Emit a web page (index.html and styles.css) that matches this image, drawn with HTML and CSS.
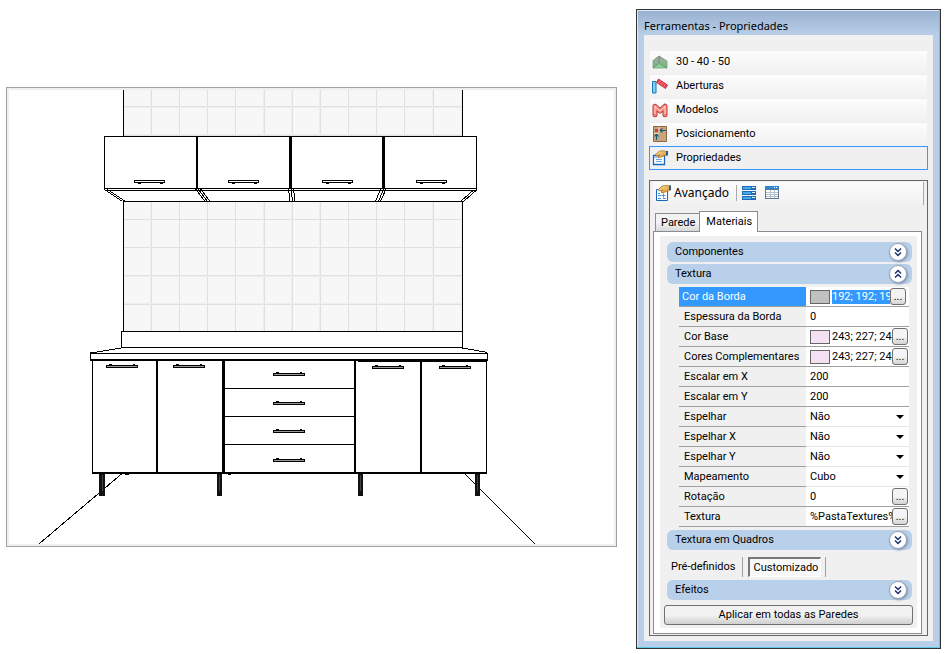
FILE: index.html
```html
<!DOCTYPE html>
<html lang="pt-BR">
<head>
<meta charset="utf-8">
<title>Ferramentas - Propriedades</title>
<link rel="stylesheet" href="styles.css">
</head>
<body>
<svg class="defs" aria-hidden="true">
  <defs>
    <linearGradient id="hand" x1="0" y1="0" x2="1" y2="1"><stop offset="0" stop-color="#ffe3a0"/><stop offset="1" stop-color="#d08a20"/></linearGradient>
    <linearGradient id="wall" x1="0" y1="0" x2="0" y2="1"><stop offset="0" stop-color="#a9b0aa"/><stop offset="1" stop-color="#6cb87e"/></linearGradient>
    <symbol id="chev" viewBox="0 0 18 18">
      <circle cx="9" cy="9" r="8.5" fill="#fff" stroke="#9aa3b8"/>
      <path d="M6 5.5l3 3 3-3M6 9.5l3 3 3-3" fill="none" stroke="#1d2f6f" stroke-width="1.5"/>
    </symbol>
    <symbol id="upper-handle" viewBox="0 0 31 4"><path d="M.5 .5h30v2h-30zM4 3.5h3M26 3.5h3" fill="#fff" stroke="#000"/></symbol>
    <symbol id="lower-handle" viewBox="0 0 32 4"><path d="M.5 1.5h31v2h-31zM3 .5h3M27 .5h2" fill="#999" stroke="#000"/></symbol>
  </defs>
</svg>
<main class="workspace">
  <figure class="view">
    <svg viewBox="9 90 605 454" role="img" aria-label="Vista frontal da cozinha" shape-rendering="crispEdges">
      <path fill="#f7f7f7" d="M124 90h338v241H124z"/>
      <path stroke="#e0e0e0" fill="none" d="M151.5 90v241M179.5 90v241M207.500 90v241M235.500 90v241M264.500 90v241M292.500 90v241M320.500 90v241M348.500 90v241M376.500 90v241M404.500 90v241M433.500 90v241M124 106.500h338M124 135.500h338M124 219.500h338M124 247.500h338M124 275.500h338M124 304.500h338"/>
      <path stroke="#eee" fill="none" d="M150.500 90v241M263.500 90v241M291.500 90v241M319.500 90v241M432.500 90v241M461.500 90v241M124 107.500h338M124 134.500h338M124 276.500h338M124 303.500h338"/>
      <path fill="#fff" d="M104 136h373v54l-14 11H123l-19-12z"/>
      <path fill="#fff" d="M121 331h342v17l25 5v7H90v-7l31-6z"/>
      <g fill="none" stroke="#000">
        <path d="M123.500 90v46M462.500 90v46M123.500 201v130M462.500 201v147"/>
        <path d="M104.500 190v-53.500h372V190M104 188.500h373M106 190.500h369M123 201.500h340"/>
        <path stroke-width="2" d="M197 137v51"/>
        <path stroke-width="3" d="M290.500 137v51M383.500 137v51"/>
        <path d="M104.500 189.500l18 12M107.500 189.500l18 12M195.500 189l9.500 12.500M198 189l9.500 12.500M200.500 189l9.500 12.500M288.500 189l1.500 12.500M291 189l1.500 12.500M293.500 189l1.500 12.500M380.500 189l-5 12.500M383.500 189l-5 12.500M386 189l-5.500 12.500M473.500 190l-13 11.500M476.500 190l-13 11.500"/>
        <path d="M121.500 347v-15.500h341M121 347.500h342M121.500 348l-31 5M462.500 348l25 4.500M90.500 360v-6.500h397v6.500"/>
        <path stroke-width="2" d="M90 360h398M92 473h395M157 361v112M355 361v112M421 361v112"/>
        <path stroke-width="3" d="M223.500 361v112"/>
        <path d="M92.500 361v112M486.500 361v112M225 388.500h129M225 416.500h129M225 444.500h129M125 474.500h4M228 474.500h3M358 361.500h128"/>
        <path d="M121.500 474l-82 69.500M465 474l70 70"/>
      </g>
      <g fill="#111"><path d="M99 474h6v22h-6zM217 474h5v22h-5zM358 474h5v22h-5zM475 474h5v22h-5z"/></g>
      <path stroke="#444" d="M102.500 475v16M219.500 475v16M360.500 475v16M477.500 475v16"/>
      <use href="#upper-handle" x="134" y="180" width="31" height="4"/>
      <use href="#upper-handle" x="228" y="180" width="31" height="4"/>
      <use href="#upper-handle" x="322" y="180" width="31" height="4"/>
      <use href="#upper-handle" x="416" y="180" width="31" height="4"/>
      <use href="#lower-handle" x="106" y="364" width="32" height="4"/>
      <use href="#lower-handle" x="173" y="364" width="32" height="4"/>
      <use href="#lower-handle" x="372" y="365" width="32" height="4"/>
      <use href="#lower-handle" x="439" y="365" width="32" height="4"/>
      <use href="#lower-handle" x="273" y="372" width="32" height="4"/>
      <use href="#lower-handle" x="273" y="401" width="32" height="4"/>
      <use href="#lower-handle" x="273" y="429" width="32" height="4"/>
      <use href="#lower-handle" x="273" y="458" width="32" height="4"/>
    </svg>
  </figure>

  <aside class="window">
    <h1 class="title">Ferramentas - Propriedades</h1>
    <div class="client">
      <nav class="tools">
        <button class="tool" type="button">
          <svg class="icon" viewBox="0 0 16 16"><path d="M1 6.500L7 2v7.500L1 14z" fill="url(#wall)" stroke="#7b937f" stroke-width=".7"/><path d="M7 2l8 5v7L7 9.500z" fill="url(#wall)" stroke="#7b937f" stroke-width=".7"/><path d="M1 14l6-4.500 8 4.500z" fill="#93cf9d" stroke="#5b9468" stroke-width=".7"/><path d="M7 2v7.500M3.500 5.500L7 2l4.500 3.500" fill="none" stroke="#8c948e"/></svg>
          30 - 40 - 50</button>
        <button class="tool" type="button">
          <svg class="icon" viewBox="0 0 16 16"><path d="M.5 3.500H4v11.500H.5z" fill="#7fd0f5" stroke="#1878b8"/><path d="M6.500 1L15.500 7 13.500 10.500 4.500 4.500z" fill="#e34350" stroke="#b82030" stroke-width=".8"/><path d="M8.500 2.500l-2 3M11 4l-2 3M13.500 6l-2 3" stroke="#f8a0a0" stroke-width=".8"/></svg>
          Aberturas</button>
        <button class="tool" type="button">
          <svg class="icon" viewBox="0 0 16 16"><path d="M3 12.800V4.200L8 9l5-4.800v8.600" fill="none" stroke="#b23a35" stroke-width="5" stroke-linejoin="round" stroke-linecap="round"/><path d="M3 12.800V4.200L8 9l5-4.800v8.600" fill="none" stroke="#f58078" stroke-width="3.400" stroke-linejoin="round" stroke-linecap="round"/><path d="M3 12V4.500L8 9l5-4.500V12" fill="none" stroke="#ffc9c0" stroke-width="1.200"/></svg>
          Modelos</button>
        <button class="tool" type="button">
          <svg class="icon" viewBox="0 0 16 16"><path d="M1.500 .5h13v15h-13z" fill="#c9a57b" stroke="#8c6844"/><path d="M3 3h3v3H3z" fill="#d33b35"/><path d="M14 4.500H8M10.500 2.500l-2.500 2 2.500 2M4.500 14V8M2.500 10.500l2-2.500 2 2.500" fill="none" stroke="#176078" stroke-width="1.200"/><path d="M7 1v5M2 7.500h5" stroke="#efe0cb" stroke-width=".8"/></svg>
          Posicionamento</button>
        <button class="tool selected" type="button">
          <svg class="icon" viewBox="0 0 16 16"><path d="M1.500 5.500h11v9h-11z" fill="#fff" stroke="#1766c0" stroke-width="1.300"/><path d="M2 6h4v2H2z" fill="#9cc4f2"/><path d="M4 9.500h6M4 11.500h6" stroke="#68a5e8"/><path d="M3 5l4-3.500 3-.8 5 .8v3.500l-4 1L7 8 6 7l2-2-3 1z" fill="url(#hand)" stroke="#a06a18" stroke-width=".7"/><path d="M14 1h2v4.500h-2z" fill="#305880"/></svg>
          Propriedades</button>
      </nav>

      <section class="box">
        <div class="toolbar">
          <button class="tb-main" type="button">
            <svg class="icon" viewBox="0 0 16 16"><path d="M1.500 4.500h11v11h-11z" fill="#fff" stroke="#1766c0"/><path d="M3 10.500h3M8.500 8.500v4M6.500 10.500h4M3 8.500h2M3 13.500h3M8 13.500h3" stroke="#4f90dc"/><path d="M3 5l4-4 3-.5 5.500.5v4l-4 1.500L7 8 6 7l2-2-3 1z" fill="url(#hand)" stroke="#a06a18" stroke-width=".7"/><path d="M14 .5h2V5h-2z" fill="#305880"/></svg>
            Avançado</button>
          <button class="tb-icon" type="button" aria-label="Categorias">
            <svg width="14" height="14" viewBox="0 0 14 14" shape-rendering="crispEdges"><path fill="#1c6bb4" d="M0 0h14v4H0zM0 5h14v4H0zM0 10h14v4H0z"/><path fill="#49a7ee" d="M1 1h8v2H1zM1 6h8v2H1zM1 11h8v2H1z"/><path fill="#e8f5ff" d="M10 1h3v1h-3zM10 6h3v1h-3zM10 11h3v1h-3z"/></svg></button>
          <button class="tb-icon" type="button" aria-label="Tabela">
            <svg width="14" height="14" viewBox="0 0 14 14" shape-rendering="crispEdges"><path fill="#5f7892" d="M0 0h14v13H0z"/><path fill="#fff" d="M1 4h12v8H1z"/><path fill="#2e87d5" d="M0 0h14v3H0z"/><path fill="#fff" d="M9 1h1v1H9zM11 1h1v1h-1z"/><path stroke="#b5c1ce" d="M1 6.500h12M1 8.500h12M1 10.500h12M5.500 4v8M9.500 4v8"/></svg></button>
        </div>
        <div class="tabs" role="tablist">
          <button class="tab" type="button" role="tab" aria-selected="false">Parede</button>
          <button class="tab active" type="button" role="tab" aria-selected="true">Materiais</button>
        </div>
        <div class="page"><div class="sheet">
          <button class="head" type="button">Componentes<svg class="chev"><use href="#chev"/></svg></button>
          <button class="head open" type="button">Textura<svg class="chev"><use href="#chev"/></svg></button>
          <table class="props">
            <tr class="current"><th scope="row"><label for="p1">Cor da Borda</label></th><td><div class="cell"><span class="swatch gray"></span><input id="p1" value="192; 192; 192"><button class="more" type="button" aria-label="Escolher cor da borda">...</button></div></td></tr>
            <tr><th scope="row"><label for="p2">Espessura da Borda</label></th><td><div class="cell"><input id="p2" value="0"></div></td></tr>
            <tr><th scope="row"><label for="p3">Cor Base</label></th><td><div class="cell"><span class="swatch"></span><input id="p3" value="243; 227; 243"><button class="more" type="button" aria-label="Escolher cor base">...</button></div></td></tr>
            <tr><th scope="row"><label for="p4">Cores Complementares</label></th><td><div class="cell"><span class="swatch"></span><input id="p4" value="243; 227; 243"><button class="more" type="button" aria-label="Escolher cores complementares">...</button></div></td></tr>
            <tr><th scope="row"><label for="p5">Escalar em X</label></th><td><div class="cell"><input id="p5" value="200"></div></td></tr>
            <tr><th scope="row"><label for="p6">Escalar em Y</label></th><td><div class="cell"><input id="p6" value="200"></div></td></tr>
            <tr class="choice"><th scope="row"><label for="p7">Espelhar</label></th><td><div class="cell"><select id="p7"><option>Não</option><option>Sim</option></select></div></td></tr>
            <tr class="choice"><th scope="row"><label for="p8">Espelhar X</label></th><td><div class="cell"><select id="p8"><option>Não</option><option>Sim</option></select></div></td></tr>
            <tr class="choice"><th scope="row"><label for="p9">Espelhar Y</label></th><td><div class="cell"><select id="p9"><option>Não</option><option>Sim</option></select></div></td></tr>
            <tr class="choice"><th scope="row"><label for="p10">Mapeamento</label></th><td><div class="cell"><select id="p10"><option>Cubo</option></select></div></td></tr>
            <tr><th scope="row"><label for="p11">Rotação</label></th><td><div class="cell"><input id="p11" value="0"><button class="more" type="button" aria-label="Editar rotação">...</button></div></td></tr>
            <tr><th scope="row"><label for="p12">Textura</label></th><td><div class="cell"><input id="p12" value="%PastaTextures%"><button class="more" type="button" aria-label="Procurar textura">...</button></div></td></tr>
          </table>
          <button class="head" type="button">Textura em Quadros<svg class="chev"><use href="#chev"/></svg></button>
          <div class="modes">
            <button class="mode" type="button">Pré-definidos</button>
            <button class="mode pressed" type="button" aria-pressed="true">Customizado</button>
          </div>
          <button class="head" type="button">Efeitos<svg class="chev"><use href="#chev"/></svg></button>
          <button class="apply" type="button">Aplicar em todas as Paredes</button>
        </div></div>
      </section>
    </div>
  </aside>
</main>
</body>
</html>
```

FILE: styles.css
```css
* { box-sizing: border-box; }
body { margin: 0; background: #fff; color: #000; font: 11px/16px "Roboto", "Liberation Sans", sans-serif; }
button, input, select { margin: 0; padding: 0; border: 0; background: none; color: inherit; font: inherit; text-align: left; }
.defs { position: absolute; width: 0; height: 0; }

.workspace { display: flex; align-items: flex-start; gap: 19px; padding: 9px 10px 5px 6px; }
.view { flex: 1; min-width: 0; margin: 78px 0 0; padding: 2px; border: 1px solid #a0a0a0; background: #efefef; }
.view svg { display: block; width: 100%; height: auto; background: #fff; }

.window { flex: 0 0 305px; padding: 0 6px 6px; border: 1px solid #333; box-shadow: inset -1px -1px #5cc8e8, inset 1px 1px #dce8f5; background: linear-gradient(#98b1d0, #b9cfe9 26px); }
.title { margin: 0; padding: 0 1px; height: 25px; font: 11px/32px "Noto Sans", sans-serif; }
.client { margin: 0 1px 1px; padding: 15px 5px 5px; background: #f0f0f0; }

.tools { display: flex; flex-direction: column; }
.tool { display: flex; align-items: center; gap: 8px; height: 24px; padding: 0 2px 1px; border: 1px solid transparent; background: linear-gradient(#fcfcfc, #f1f1f1) padding-box; }
.tool.selected { border-color: #3399ff; background: #f0f0f0; }
.icon { flex: none; width: 16px; height: 16px; }
.tool .icon { margin-top: 1px; }

.box { margin-top: 10px; padding: 1px 5px 1px 3px; border: 1px solid #666; }
.toolbar { display: flex; align-items: center; height: 23px; margin-right: -2px; padding: 0 0 2px 2px; border-right: 1px solid #aaa; background: linear-gradient(#fcfcfc, #f1f1f1); }
.tb-main { display: flex; align-items: center; gap: 3px; height: 16px; padding-right: 7px; border-right: 1px solid #aaa; font: 12px/16px "Noto Sans", sans-serif; }
.tb-icon { display: flex; margin-left: 5px; margin-right: 4px; }

.tabs { display: flex; align-items: flex-end; height: 27px; margin: 0 2px -1px; position: relative; }
.tab { height: 19px; padding: 0 4px 0 5px; border: 1px solid #898c95; border-right: 0; background: linear-gradient(#f3f3f3 50%, #d8d8d8); }
.tab.active { height: 21px; padding: 0 5px 1px 6px; border-right: 1px solid #898c95; border-bottom: 0; background: #fff; }
.page { padding: 4px 4px 5px 6px; border: 1px solid #898c95; background: #fff; }
.sheet { padding: 6px 4px 3px; background: #f0f0f0; }

.head { display: flex; align-items: center; justify-content: space-between; width: calc(100% - 4px); height: 20px; margin: 0 1px 2px 3px; padding: 0 5px 0 8px; border-radius: 6px; background: #b9d0ea; }
.chev { flex: none; width: 18px; height: 18px; filter: drop-shadow(1px 1px 1px #7d92b0); }
.open .chev { transform: rotate(180deg); filter: drop-shadow(-1px -1px 1px #7d92b0); }

.props { width: calc(100% - 19px); margin: 3px 4px 3px 15px; border-collapse: separate; border-spacing: 0; table-layout: fixed; }
.props th, .props td { height: 20px; padding: 0; border-bottom: 1px solid #a0a0a0; font-weight: normal; text-align: left; white-space: nowrap; }
.props th { width: 127px; padding-left: 5px; }
.props td { background: #fff; }
.props .choice td { border-color: #dfe6ee; }
.props .current th { padding-left: 3px; background: #3399ff; color: #fff; }
.cell { display: flex; align-items: center; height: 19px; padding: 0 1px 0 4px; }
.cell input, .cell select { flex: 1; width: 0; min-width: 0; height: 18px; }
.cell input:focus { outline: 0; }
.swatch { flex: none; width: 20px; height: 14px; margin-right: 2px; border: 1px solid #666; background: #f3e0f3; }
.swatch.gray { background: #c0c0c0; }
.current input { height: 14px; background: #3399ff; color: #fff; }
.current .cell { padding-right: 3px; }
.more { flex: none; width: 16px; height: 17px; border: 1px solid #707070; border-radius: 3px; background: linear-gradient(#f4f4f4 50%, #d4d4d4); text-align: center; }
.cell select { appearance: none; }
.choice .cell::after { content: ""; margin-right: 4px; border: 4px solid transparent; border-top-color: #000; border-bottom: 0; }

.modes { display: flex; align-items: center; height: 20px; margin: 7px 2px 3px; }
.mode { height: 20px; padding: 0 7px 0 5px; border-right: 1px solid #a0a0a0; }
.pressed { position: relative; margin: 0 4px 0 5px; padding: 0 2px 0 3px; border: 1px solid #fff; border-top: 2px solid #777; border-left: 2px solid #777; background: #f8f8f8; }
.modes::after { content: ""; height: 20px; border-right: 1px solid #a0a0a0; }
.apply { display: block; width: 100%; height: 20px; margin-top: 5px; border: 1px solid #707070; border-radius: 3px; background: linear-gradient(#f2f2f2 50%, #d0d0d0); text-align: center; }
```
